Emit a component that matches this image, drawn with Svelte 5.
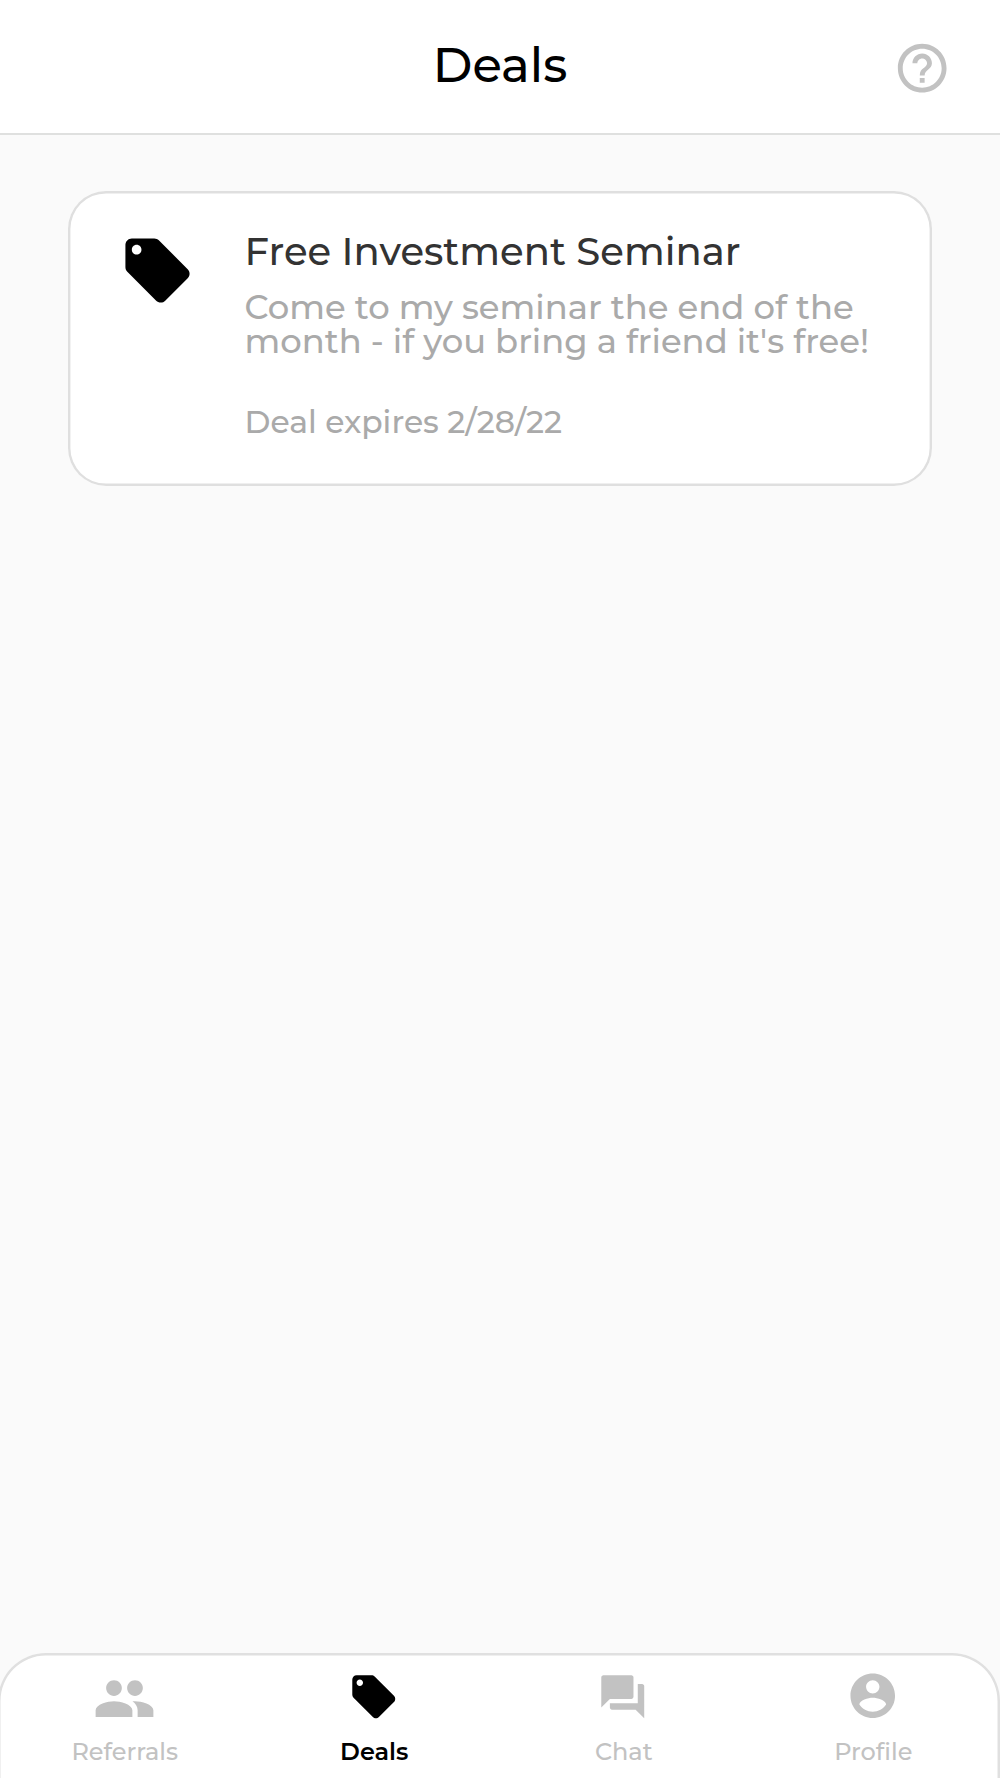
<script>
  const tag = 'M21.41 11.58l-9-9C12.05 2.22 11.55 2 11 2H4c-1.1 0-2 .9-2 2v7c0 .55.22 1.05.59 1.42l9 9c.36.36.86.58 1.41.58s1.05-.22 1.41-.59l7-7c.37-.36.59-.86.59-1.41s-.23-1.06-.59-1.42zM5.5 7C4.67 7 4 6.33 4 5.5S4.67 4 5.5 4 7 4.67 7 5.5 6.33 7 5.5 7z';
  const tabs = [
    { id: 'referrals', label: 'Referrals', icon: 'M16 11c1.66 0 2.99-1.34 2.99-3S17.66 5 16 5s-3 1.34-3 3 1.34 3 3 3zm-8 0c1.66 0 2.99-1.34 2.99-3S9.66 5 8 5 5 6.34 5 8s1.34 3 3 3zm0 2c-2.33 0-7 1.17-7 3.5V19h14v-2.5c0-2.33-4.67-3.5-7-3.5zm8 0c-.29 0-.62.02-.97.05 1.16.84 1.97 1.97 1.97 3.45V19h6v-2.5c0-2.33-4.67-3.5-7-3.5z' },
    { id: 'deals', label: 'Deals', icon: tag, active: true },
    { id: 'chat', label: 'Chat', icon: 'M21 6h-2v9H6v2c0 .55.45 1 1 1h11l4 4V7c0-.55-.45-1-1-1zm-4 6V3c0-.55-.45-1-1-1H3c-.55 0-1 .45-1 1v14l4-4h10c.55 0 1-.45 1-1z' },
    { id: 'profile', label: 'Profile', icon: 'M12 2C6.48 2 2 6.48 2 12s4.48 10 10 10 10-4.48 10-10S17.52 2 12 2zm0 3c1.66 0 3 1.34 3 3s-1.34 3-3 3-3-1.34-3-3 1.34-3 3-3zm0 14.2c-2.5 0-4.71-1.28-6-3.22.03-1.99 4-3.08 6-3.08 1.99 0 5.97 1.09 6 3.08-1.29 1.94-3.5 3.22-6 3.22z' }
  ];
</script>

<div class="screen">
  <header>
    <h1>Deals</h1>
    <button class="help" aria-label="Help">
      <svg viewBox="0 0 24 24"><path d="M11 18h2v-2h-2v2zm1-16C6.48 2 2 6.48 2 12s4.48 10 10 10 10-4.48 10-10S17.52 2 12 2zm0 18c-4.41 0-8-3.59-8-8s3.59-8 8-8 8 3.59 8 8-3.59 8-8 8zm0-14c-2.21 0-4 1.79-4 4h2c0-1.1.9-2 2-2s2 .9 2 2c0 2-3 1.75-3 5h2c0-2.25 3-2.5 3-5 0-2.21-1.79-4-4-4z" /></svg>
    </button>
  </header>

  <main>
    <article>
      <svg class="deal-icon" viewBox="0 0 24 24"><path d={tag} /></svg>
      <div class="copy">
        <h2>Free Investment Seminar</h2>
        <p class="desc">Come to my seminar the end of the month - if you bring a friend it's free!</p>
        <p class="expires">Deal expires 2/28/22</p>
      </div>
    </article>
  </main>

  <nav>
    {#each tabs as tab}
      <button class="tab {tab.id}" class:active={tab.active}>
        <span class="slot"><svg viewBox="0 0 24 24"><path d={tab.icon} /></svg></span>
        <span class="label">{tab.label}</span>
      </button>
    {/each}
  </nav>
</div>

<style>
  :global(body) { margin: 0; background: #fafafa; }
  .screen {
    width: 1000px; height: 1778px; overflow: hidden;
    display: flex; flex-direction: column;
    background: #fafafa;
    font-family: Montserrat, Inter, "Liberation Sans", sans-serif;
    font-weight: 500;
  }
  svg { display: block; fill: currentColor; flex: none; }
  button { border: 0; padding: 0; background: none; font: inherit; color: #c2c2c2; }
  h1, h2, p { margin: 0; font-weight: 500; }

  header {
    box-sizing: border-box; height: 135px; flex: none;
    display: grid; grid-template-columns: 1fr auto 1fr; align-items: center;
    background: #fff; border-bottom: 2px solid #dfe0df;
  }
  h1 { grid-column: 2; font-size: 48px; line-height: 60px; padding-bottom: 3px; color: #000; }
  .help { justify-self: end; margin: 3px 48.5px 0 0; }
  .help svg { width: 58.4px; height: 58.4px; }

  main { flex: 1; padding: 56px 68px 0; }
  article {
    box-sizing: border-box; height: 294.5px; display: flex;
    padding: 41px 0 0 50.5px; gap: 49px;
    background: #fff; box-shadow: inset 0 0 0 2.4px #dfdfdf; border-radius: 38px;
  }
  .deal-icon { width: 77px; height: 77px; color: #000; }
  .copy { width: 650px; }
  h2 { font-size: 38.6px; line-height: 40px; color: #333; }
  .desc { margin-top: 18px; font-size: 33.8px; line-height: 33.7px; color: #aaa; }
  .expires { margin-top: 48px; font-size: 31.4px; line-height: 34px; color: #aaa; }

  nav {
    box-sizing: border-box; width: 1002px; height: 139.5px; flex: none;
    margin: 0 0 -14px -2px; padding: 2px 2px 0;
    display: grid; grid-template-columns: repeat(4, 1fr);
    background: #fff; box-shadow: inset 0 0 0 2.5px #e0e0e0;
    border-radius: 48px 48px 0 0;
  }
  .tab { display: flex; flex-direction: column; align-items: center; }
  .slot { height: 84px; display: flex; align-items: center; margin-right: 1.5px; }
  .slot svg { width: 51.5px; height: 51.5px; }
  .referrals .slot svg { width: 63px; height: 63px; margin-top: 3px; }
  .profile .slot svg { width: 53.5px; height: 53.5px; margin-top: -2px; }
  .label { font-size: 24px; line-height: 26px; }
  .active { color: #000; }
  .active .label { font-weight: 600; }
</style>
